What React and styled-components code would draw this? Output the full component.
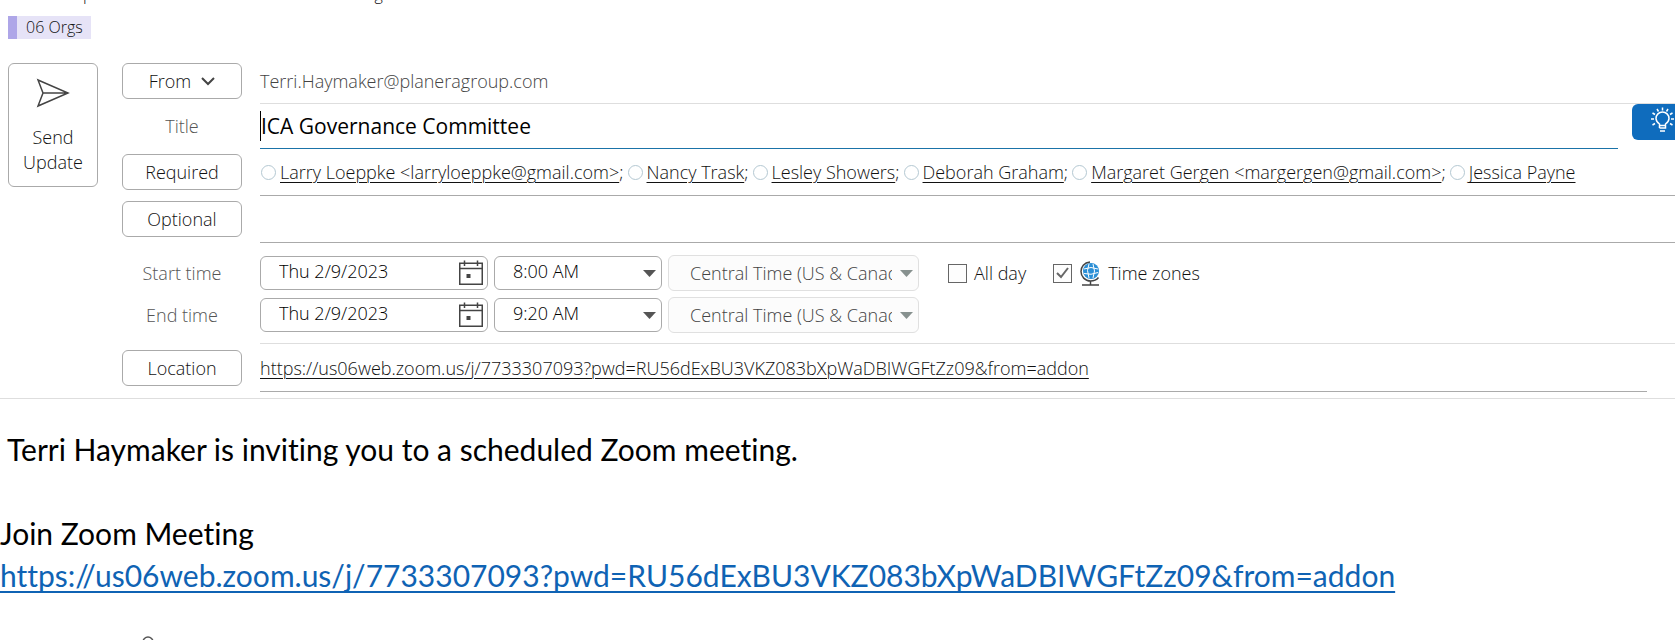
import React from "react";
import styled, { createGlobalStyle } from "styled-components";

const uiFont = `"Open Sans", "Noto Sans", sans-serif`;
const bodyFont = `Lato, "Open Sans", sans-serif`;

const GlobalStyle = createGlobalStyle`
  * { box-sizing: border-box; }
  html, body { margin: 0; background: #fff; }
  body { font-family: ${uiFont}; font-size: 18px; font-weight: 300; color: #111; overflow: hidden; }
  button, input, select { font: inherit; color: inherit; margin: 0; }
`;

const Page = styled.div`
  display: flex;
  flex-direction: column;
  min-height: 100vh;
`;

const ClippedLine = styled.div`
  display: flex;
  align-items: flex-end;
  gap: 282px;
  height: 4px;
  padding-left: 83px;
  overflow: hidden;
  line-height: 20px;
  font-size: 16px;
`;

const CategoryBar = styled.div`
  display: flex;
  padding: 12px 8px 24px;
`;

const Category = styled.span`
  height: 23px;
  padding: 0 8px 0 9px;
  border-left: 9px solid #aea6e8;
  background: #e6e3f7;
  font-size: 16px;
  line-height: 22px;
`;

const Header = styled.header`
  display: flex;
  align-items: flex-start;
  gap: 24px;
  padding: 0 0 6px 8px;
  border-bottom: 1px solid #dedede;
`;

const OutlineButton = styled.button`
  display: flex;
  align-items: center;
  justify-content: center;
  gap: 10px;
  width: 100%;
  height: 36px;
  padding: 0;
  border: 1px solid #aaa;
  border-radius: 6px;
  background: #fff;
  color: #111;
`;

const SendButton = styled(OutlineButton)`
  flex: none;
  flex-direction: column;
  gap: 17px;
  width: 90px;
  height: 124px;
  padding-top: 3px;
  line-height: 25px;
`;

const Form = styled.form`
  flex: 1;
  min-width: 0;
`;

const Row = styled.div`
  display: grid;
  grid-template-columns: 120px minmax(0, 1fr);
  column-gap: 18px;
  align-items: stretch;
  height: ${(p) => p.$height}px;
`;

const LabelCell = styled.div`
  display: flex;
  align-items: ${(p) => (p.$top ? "flex-start" : "center")};
  justify-content: center;
  padding-bottom: 1px;
  color: #555;
`;

const Field = styled.div`
  display: flex;
  align-items: center;
  min-width: 0;
  margin-right: ${(p) => p.$inset || 0}px;
  padding-bottom: ${(p) => p.$lift || 0}px;
  border-bottom: 1px solid ${(p) => p.$line};
  white-space: nowrap;
`;

const Sender = styled.span`
  color: #444;
`;

const TitleArea = styled.div`
  display: flex;
  align-items: flex-start;
  gap: 14px;
  min-width: 0;
`;

const TitleField = styled(Field)`
  flex: 1;
  height: 45px;
`;

const Caret = styled.span`
  width: 1px;
  height: 30px;
  background: #000;
`;

const PlainInput = styled.input`
  flex: 1;
  min-width: 0;
  height: 100%;
  padding: 0;
  border: 0;
  outline: 0;
  background: transparent;
`;

const TitleInput = styled(PlainInput)`
  color: #000;
  font-size: 21px;
  font-weight: 400;
`;

const IdeasButton = styled.button`
  flex: none;
  width: 43px;
  height: 36px;
  padding: 0 0 0 18px;
  border: 0;
  border-radius: 6px 0 0 6px;
  background: #0f6cbd;
  overflow: hidden;
`;

const Recipient = styled.span`
  display: flex;
  align-items: center;
  padding-left: 1px;
  margin-right: 3px;
`;

const Presence = styled.span`
  width: 15px;
  height: 15px;
  margin-right: 4px;
  border: 1px solid #b4c8d2;
  border-radius: 50%;
`;

const TextLink = styled.a`
  color: #111;
  text-decoration: underline;
  text-decoration-thickness: 1px;
  text-underline-offset: 3px;
`;

const Times = styled.div`
  padding: 12px 0 10px;
  display: grid;
  row-gap: 6px;
`;

const Divider = styled.hr`
  height: 1px;
  margin: 0 0 0 138px;
  border: 0;
  background: #dedede;
`;

const TimeFields = styled.div`
  display: flex;
  align-items: center;
  gap: 6px;
`;

const Box = styled.div`
  display: grid;
  align-items: center;
  width: ${(p) => p.$width}px;
  height: ${(p) => (p.$muted ? 36 : 34)}px;
  border: 1px solid ${(p) => (p.$muted ? "#e0e0e0" : "#aaa")};
  border-radius: 6px;
  background: ${(p) => (p.$muted ? "#fcfcfc" : "#fff")};
  color: ${(p) => (p.$muted ? "#444" : "#000")};

  > * { grid-area: 1 / 1; }
  > svg { justify-self: end; pointer-events: none; }
`;

const BoxInput = styled.input`
  width: 100%;
  height: 100%;
  padding: 0 40px 4px 18px;
  border: 0;
  outline: 0;
  background: transparent;
`;

const BoxSelect = styled.select`
  appearance: none;
  width: 100%;
  height: 100%;
  padding: 0 26px ${(p) => (p.disabled ? 0 : 4)}px ${(p) => (p.disabled ? 21 : 18)}px;
  border: 0;
  outline: 0;
  background: transparent;
  opacity: 1;
`;

const CheckLabel = styled.label`
  display: flex;
  align-items: center;
  gap: ${(p) => p.$gap}px;
  margin-left: ${(p) => p.$before}px;
`;

const CheckWrap = styled.span`
  display: grid;
  place-items: center;
  > * { grid-area: 1 / 1; }
  > svg { pointer-events: none; }
`;

const CheckBox = styled.input`
  appearance: none;
  width: 19px;
  height: 19px;
  border: 1px solid #666;
  background: #fdfdfd;
`;

const Message = styled.main`
  flex: 1;
  padding-top: 29px;
  color: #000;
  font-family: ${bodyFont};
  font-size: 30px;
  font-weight: 400;
  font-variant-ligatures: none;
  line-height: 42px;
  white-space: nowrap;
`;

const Paragraph = styled.p`
  margin: 0 0 ${(p) => p.$after || 0}px;
  padding-left: ${(p) => p.$indent || 0}px;
`;

const MeetingLink = styled.a`
  color: #0f63b4;
  text-decoration: underline;
  text-decoration-thickness: 2px;
  text-underline-offset: 4px;
  text-decoration-skip-ink: none;
`;

const RingEdge = styled.div`
  height: 4px;
  margin: 40px 0 0 142px;
  overflow: hidden;
  line-height: 0;
`;

const SendIcon = () => (
  <svg width="34" height="30" viewBox="0 0 34 30" fill="none" stroke="#444" strokeWidth="1.5" strokeLinejoin="miter">
    <path d="M2 2 32 15 2 28 7 15Z M7 15H32" />
  </svg>
);

const ChevronIcon = () => (
  <svg width="14" height="9" viewBox="0 0 14 9" fill="none" stroke="#444" strokeWidth="2">
    <path d="M1 1 7 7 13 1" />
  </svg>
);

const BulbIcon = () => (
  <svg width="25" height="26" viewBox="0 0 25 26" fill="none" stroke="#fff" strokeWidth="1.5">
    <path d="M9.500 18.500V17C7.500 15.500 6 14 6 11.500a6.500 6.500 0 0 1 13 0c0 2.500-1.500 4-3.500 5.500v1.500Z M9.500 21h6v-2.500 M9.500 21v-2.500 M10 24h5" />
    <path d="M12.500 0.500v3 M7 2l1.500 2.500 M18 2l-1.500 2.500 M2.500 6l2.500 1.500 M22.500 6 20 7.500 M1 12h3 M21 12h3 M2.500 18 5 16.500 M22.500 18 20 16.500" />
  </svg>
);

const CalendarIcon = () => (
  <svg width="28" height="26" viewBox="0 0 28 26" fill="none" stroke="#444" strokeWidth="1.5">
    <path d="M0.750 3.250H23.250V24.250H0.750Z M0.750 8.500H23.250 M5.500 0.500V6 M18.500 0.500V6" />
    <path d="M7.500 14h4v4h-4z" fill="#444" stroke="none" />
  </svg>
);

const ArrowIcon = ({ color = "#555", inset = 5 }) => (
  <svg width={13 + inset} height="7" viewBox={`0 0 ${13 + inset} 7`}>
    <path d="M0 0H13L6.500 7Z" fill={color} />
  </svg>
);

const TickIcon = () => (
  <svg width="13" height="12" viewBox="0 0 13 12" fill="none" stroke="#666" strokeWidth="2">
    <path d="M1 6 5 10 12 1" />
  </svg>
);

const GlobeIcon = () => (
  <svg width="20" height="25" viewBox="0 0 20 25" fill="none">
    <circle cx="11" cy="10" r="8" fill="#2b8fd6" />
    <path d="M4 8q7-3 14 0 M4 12.500q7 2 14-1 M9 3q-3 6 0 14 M13 3q3 7 0 14" stroke="#fff" strokeWidth="1" />
    <path d="M10 1C4 1.500 1 6 1 10.500c0 5 4 9.500 9.500 9.500 3 0 6-1 8-3.500 M10.500 20v3.500 M2 24H19" stroke="#444" strokeWidth="1.500" />
  </svg>
);

const meetingUrl = "https://us06web.zoom.us/j/7733307093?pwd=RU56dExBU3VKZ083bXpWaDBIWGFtZz09&from=addon";

const recipients = [
  "Larry Loeppke <larryloeppke@gmail.com>",
  "Nancy Trask",
  "Lesley Showers",
  "Deborah Graham",
  "Margaret Gergen <margergen@gmail.com>",
  "Jessica Payne",
];

function TimeRow({ id, label, time, children }) {
  return (
    <Row $height={36}>
      <LabelCell as="label" htmlFor={id}>{label}</LabelCell>
      <TimeFields>
        <Box $width={228}>
          <BoxInput id={id} defaultValue="Thu 2/9/2023" />
          <CalendarIcon />
        </Box>
        <Box $width={168}>
          <BoxSelect aria-label={`${label} of day`} defaultValue={time}>
            <option>{time}</option>
          </BoxSelect>
          <ArrowIcon />
        </Box>
        <Box $width={251} $muted>
          <BoxSelect aria-label={`${label} zone`} disabled>
            <option>Central Time (US &amp; Canada)</option>
          </BoxSelect>
          <ArrowIcon color="#87918f" />
        </Box>
        {children}
      </TimeFields>
    </Row>
  );
}

export default function App() {
  return (
    <Page>
      <GlobalStyle />
      <ClippedLine aria-hidden="true"><span>p</span><span>g</span></ClippedLine>
      <CategoryBar><Category>06 Orgs</Category></CategoryBar>

      <Header>
        <SendButton type="button">
          <SendIcon />
          <span>Send<br />Update</span>
        </SendButton>

        <Form>
          <Row $height={41}>
            <LabelCell $top>
              <OutlineButton type="button">From <ChevronIcon /></OutlineButton>
            </LabelCell>
            <Field $line="#dedede" $lift={4}><Sender>Terri.Haymaker@planeragroup.com</Sender></Field>
          </Row>

          <Row $height={45}>
            <LabelCell as="label" htmlFor="title">Title</LabelCell>
            <TitleArea>
              <TitleField $line="#1a73a8">
                <Caret />
                <TitleInput id="title" defaultValue="ICA Governance Committee" />
              </TitleField>
              <IdeasButton type="button" aria-label="Suggestions"><BulbIcon /></IdeasButton>
            </TitleArea>
          </Row>

          <Row $height={47}>
            <LabelCell><OutlineButton type="button">Required</OutlineButton></LabelCell>
            <Field $line="#aaa">
              {recipients.map((name, i) => (
                <Recipient key={name}>
                  <Presence />
                  <TextLink href="#">{name}</TextLink>
                  {i < recipients.length - 1 && ";"}
                </Recipient>
              ))}
            </Field>
          </Row>

          <Row $height={47}>
            <LabelCell><OutlineButton type="button">Optional</OutlineButton></LabelCell>
            <Field $line="#aaa"><PlainInput aria-label="Optional attendees" /></Field>
          </Row>

          <Times>
            <TimeRow id="start" label="Start time" time="8:00 AM">
              <CheckLabel $gap={7} $before={23}>
                <CheckWrap><CheckBox type="checkbox" /></CheckWrap>
                All day
              </CheckLabel>
              <CheckLabel $gap={8} $before={21}>
                <CheckWrap><CheckBox type="checkbox" defaultChecked /><TickIcon /></CheckWrap>
                <GlobeIcon />
                Time zones
              </CheckLabel>
            </TimeRow>
            <TimeRow id="end" label="End time" time="9:20 AM" />
          </Times>
          <Divider />

          <Row $height={48}>
            <LabelCell><OutlineButton type="button">Location</OutlineButton></LabelCell>
            <Field $line="#aaa" $inset={28}><TextLink href={meetingUrl}>{meetingUrl}</TextLink></Field>
          </Row>
        </Form>
      </Header>

      <Message>
        <Paragraph $indent={7} $after={42}>Terri Haymaker is inviting you to a scheduled Zoom meeting.</Paragraph>
        <Paragraph>Join Zoom Meeting</Paragraph>
        <Paragraph><MeetingLink href={meetingUrl}>{meetingUrl}</MeetingLink></Paragraph>
        <RingEdge>
          <svg width="12" height="12" viewBox="0 0 12 12" fill="none" stroke="#555" strokeWidth="1.500">
            <circle cx="6" cy="6" r="5" />
          </svg>
        </RingEdge>
      </Message>
    </Page>
  );
}
